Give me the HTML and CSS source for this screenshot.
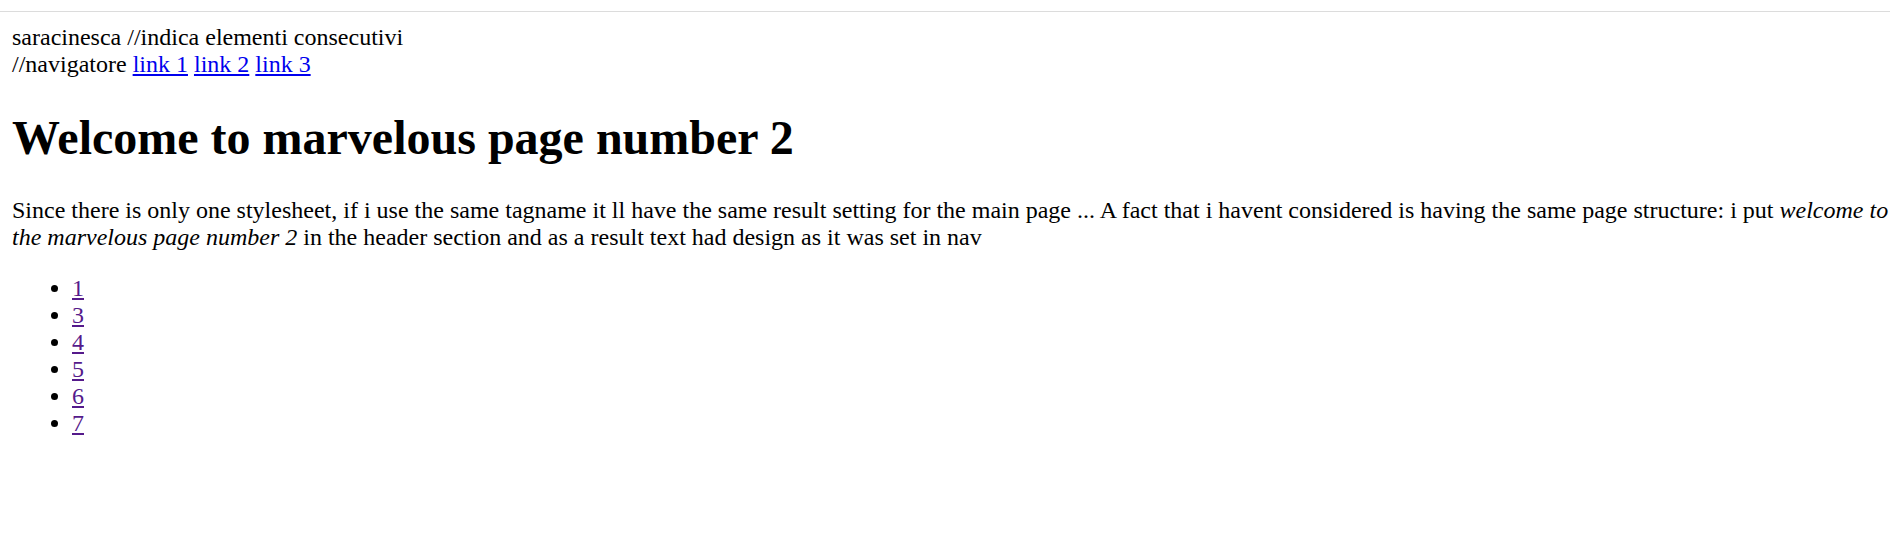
FILE: index.html
```html
<!DOCTYPE html>
<html lang="it">
<head>
<meta charset="utf-8">
<title>page 2</title>
<link rel="stylesheet" href="styles.css">
</head>
<body>
<div class="chrome"></div>
<div class="page">
  <header class="top">
    <div>saracinesca //indica elementi consecutivi</div>
    <nav>//navigatore <a href="#" class="link">link 1</a> <a href="#" class="link">link 2</a> <a href="#" class="link">link 3</a></nav>
  </header>
  <h1 class="title">Welcome to marvelous page number 2</h1>
  <p class="text">Since there is only one stylesheet, if i use the same tagname it ll have the same result setting for the main page ... A fact that i havent considered is having the same page structure: i put <em>welcome to the marvelous page number 2</em> in the header section and as a result text had design as it was set in nav</p>
  <ul class="list">
    <li><a href="#" class="visited">1</a></li>
    <li><a href="#" class="visited">3</a></li>
    <li><a href="#" class="visited">4</a></li>
    <li><a href="#" class="visited">5</a></li>
    <li><a href="#" class="visited">6</a></li>
    <li><a href="#" class="visited">7</a></li>
  </ul>
</div>
</body>
</html>
```

FILE: styles.css
```css
html, body {
  margin: 0;
  padding: 0;
  background: #fff;
}
body {
  font-family: "Liberation Serif", "Times New Roman", serif;
  font-size: 24px;
  color: #000;
}
.chrome {
  height: 11px;
  border-bottom: 1px solid #dcdcdc;
}
.page {
  padding: 12px 0 12px 12px;
}
.link {
  color: #0000ee;
}
.visited {
  color: #551a8b;
}
.title {
  font-size: 48px;
  font-weight: bold;
  margin: 32px 0;
}
.text {
  margin: 24px 0;
}
.list {
  margin: 24px 0;
  padding-left: 60px;
}
```
